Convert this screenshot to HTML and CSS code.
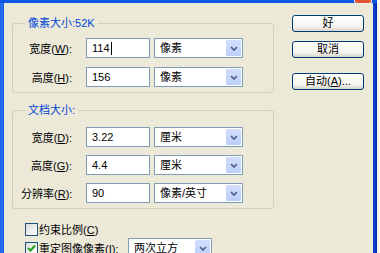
FILE: index.html
```html
<!DOCTYPE html>
<html lang="zh-CN">
  <head>
    <meta charset="UTF-8" />
    <title>图像大小</title>
    <link rel="stylesheet" href="styles.css">
  </head>

  <body>
    <div class="window">
      <div class="title-bar"><span class="close-btn"></span></div>
      <div class="frame">
        <div class="edge-left"></div>
        <div class="dialog">
          <div class="main-col">
            <fieldset class="group group-pixels">
              <legend>像素大小:52K</legend>
              <div class="field-row">
                <label class="field-label">宽度(<u>W</u>):</label>
                <div class="text-box">114<span class="caret"></span></div>
                <div class="combo">
                  <span class="combo-value">像素</span>
                  <span class="combo-arrow"><svg width="8" height="5" viewBox="0 0 8 5"><path d="M1 1 L4 4 L7 1" /></svg></span>
                </div>
              </div>
              <div class="field-row">
                <label class="field-label">高度(<u>H</u>):</label>
                <div class="text-box">156</div>
                <div class="combo">
                  <span class="combo-value">像素</span>
                  <span class="combo-arrow"><svg width="8" height="5" viewBox="0 0 8 5"><path d="M1 1 L4 4 L7 1" /></svg></span>
                </div>
              </div>
            </fieldset>

            <fieldset class="group group-doc">
              <legend>文档大小:</legend>
              <div class="field-row">
                <label class="field-label">宽度(<u>D</u>):</label>
                <div class="text-box">3.22</div>
                <div class="combo">
                  <span class="combo-value">厘米</span>
                  <span class="combo-arrow"><svg width="8" height="5" viewBox="0 0 8 5"><path d="M1 1 L4 4 L7 1" /></svg></span>
                </div>
              </div>
              <div class="field-row">
                <label class="field-label">高度(<u>G</u>):</label>
                <div class="text-box">4.4</div>
                <div class="combo">
                  <span class="combo-value">厘米</span>
                  <span class="combo-arrow"><svg width="8" height="5" viewBox="0 0 8 5"><path d="M1 1 L4 4 L7 1" /></svg></span>
                </div>
              </div>
              <div class="field-row">
                <label class="field-label">分辨率(<u>R</u>):</label>
                <div class="text-box">90</div>
                <div class="combo">
                  <span class="combo-value">像素/英寸</span>
                  <span class="combo-arrow"><svg width="8" height="5" viewBox="0 0 8 5"><path d="M1 1 L4 4 L7 1" /></svg></span>
                </div>
              </div>
            </fieldset>

            <div class="check-row check-constrain">
              <span class="checkbox"></span>
              <span>约束比例(<u>C</u>)</span>
            </div>
            <div class="check-row check-resample">
              <span class="checkbox checked"><svg width="11" height="11" viewBox="0 0 11 11"><path d="M2 5 L4.5 7.5 L9 2.5" /></svg></span>
              <span class="resample-label">重定图像像素(<u>I</u>):</span>
              <div class="combo combo-small">
                <span class="combo-value">两次立方</span>
                <span class="combo-arrow"><svg width="8" height="5" viewBox="0 0 8 5"><path d="M1 1 L4 4 L7 1" /></svg></span>
              </div>
            </div>
          </div>

          <div class="button-col">
            <button class="xp-button">好</button>
            <button class="xp-button">取消</button>
            <button class="xp-button btn-auto">自动(<u>A</u>)...</button>
          </div>
        </div>
        <div class="edge-right"></div>
        <div class="outside"></div>
      </div>
    </div>
  </body>
</html>
```

FILE: styles.css
```css
* {
  box-sizing: border-box;
}

body {
  margin: 0;
  background: #fff;
  font-family: "Liberation Sans", "Noto Sans CJK SC", sans-serif;
  font-size: 11px;
  color: #000;
}

u {
  text-decoration: underline;
  text-underline-offset: 1px;
}

.window {
  width: 380px;
  height: 253px;
  overflow: hidden;
  display: flex;
  flex-direction: column;
}

.title-bar {
  position: relative;
  flex: none;
  height: 3px;
  margin-right: 3px;
  background: #0b57e4;
}

.close-btn {
  position: absolute;
  right: 5px;
  top: -14px;
  width: 18px;
  height: 18px;
  border: 1px solid #f4f4f4;
  border-radius: 3px;
  background: #e2522b;
}

.frame {
  flex: 1;
  display: flex;
}

.edge-left {
  width: 4px;
  background: linear-gradient(to right, #1a5fe0, #2d77f3 50%, #0a4fe0);
}

.edge-right {
  width: 4px;
  background: linear-gradient(to right, #0b3fcf, #0a3ac8 50%, #00219a);
}

.outside {
  width: 3px;
  background: #f2f2ef;
}

.dialog {
  flex: 1;
  display: flex;
  align-items: flex-start;
  padding: 12px 0 0 8px;
  background: #ece9d8;
}

/* left column */

.main-col {
  width: 262px;
  padding-top: 1px;
}

.group {
  width: 262px;
  margin: 0;
  padding: 8px 0 5px 8px;
  min-width: 0;
  border: 1px solid #d0d0bf;
  border-radius: 3px;
  display: flex;
  flex-direction: column;
}

.group legend {
  margin-left: 4px;
  padding: 0 3px;
  line-height: 14px;
  color: #0046d5;
}

.group-pixels {
  gap: 9px;
}

.group-doc {
  margin-top: 10px;
  padding-top: 10px;
  gap: 8px;
}

.field-row {
  display: flex;
  align-items: center;
  height: 20px;
}

.field-label {
  width: 51px;
  margin-right: 14px;
  text-align: right;
  white-space: nowrap;
}

.text-box {
  width: 64px;
  height: 20px;
  margin-right: 4px;
  padding-left: 5px;
  line-height: 18px;
  border: 1px solid #7f9db9;
  background: #fff;
}

.caret {
  display: inline-block;
  width: 1px;
  height: 13px;
  margin-left: 1px;
  vertical-align: -3px;
  background: #000;
}

.combo {
  display: flex;
  width: 89px;
  height: 20px;
  border: 1px solid #7f9db9;
  background: #fff;
}

.combo-value {
  flex: 1;
  padding-left: 5px;
  line-height: 18px;
  white-space: nowrap;
}

.combo-arrow {
  display: flex;
  align-items: center;
  justify-content: center;
  width: 15px;
  margin: 1px;
  border-radius: 1px;
  background: linear-gradient(#d2defb, #bccefa);
}

.combo-arrow path {
  fill: none;
  stroke: #4d6185;
  stroke-width: 1.7;
}

.combo-small {
  width: 84px;
}

.check-row {
  display: flex;
  align-items: center;
  padding-left: 13px;
}

.check-constrain {
  height: 14px;
  margin-top: 13px;
}

.check-resample {
  height: 20px;
  margin-top: 2px;
}

.checkbox {
  display: flex;
  align-items: center;
  justify-content: center;
  width: 13px;
  height: 13px;
  margin-right: 1px;
  border: 1px solid #1c5180;
  background: linear-gradient(135deg, #dcdcd7, #fff);
}

.checkbox path {
  fill: none;
  stroke: #21a121;
  stroke-width: 2;
}

.resample-label {
  width: 89px;
  white-space: nowrap;
}

/* right column */

.button-col {
  display: flex;
  flex-direction: column;
  width: 72px;
  margin-left: 18px;
}

.xp-button {
  height: 17px;
  padding: 0;
  font: inherit;
  line-height: 15px;
  color: #000;
  border: 1px solid #003c74;
  border-radius: 3px;
  background: linear-gradient(#fff, #f3f3ee 70%, #d8d4c8);
}

.xp-button + .xp-button {
  margin-top: 9px;
}

.btn-auto {
  margin-top: 15px !important;
}
```
